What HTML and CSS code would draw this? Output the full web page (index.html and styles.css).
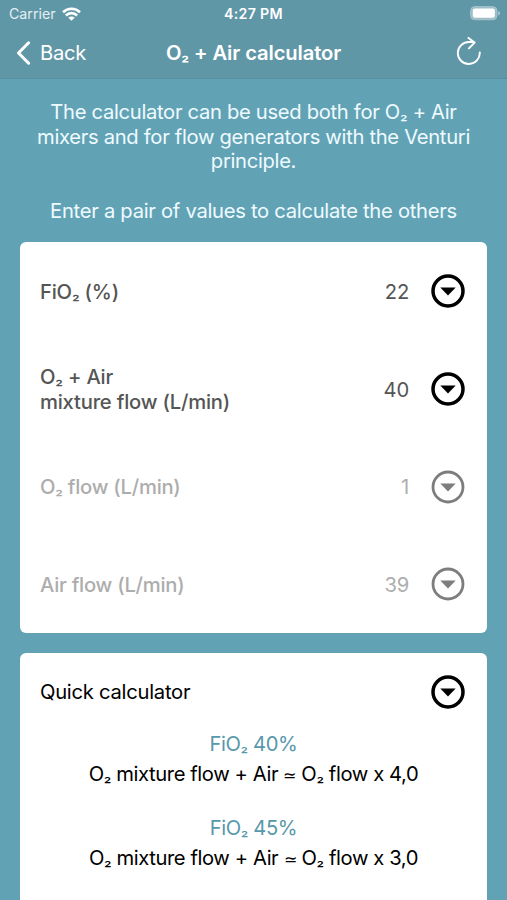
FILE: index.html
```
<!DOCTYPE html>
<html lang="en">
<head>
<meta charset="utf-8">
<title>O₂ + Air calculator</title>
<link rel="stylesheet" href="styles.css">
</head>
<body>
<svg class="defs" aria-hidden="true">
  <symbol id="drop" viewBox="0 0 34 34">
    <circle cx="17" cy="17" r="15" fill="none" stroke="currentColor" stroke-width="var(--ring)"/>
    <path d="M9.3 13.6h15.4L17 21.5z" fill="currentColor"/>
  </symbol>
</svg>
<header class="top">
  <div class="status">
    <div class="carrier"><span>Carrier</span>
      <svg width="19" height="14" viewBox="0 0 19 14" fill="none" stroke="#fff" stroke-width="2.6"><path d="M1 5.2a12.2 12.2 0 0 1 17 0M3.9 8.5a7.8 7.8 0 0 1 11.2 0"/><path d="M9.5 13.7L6.3 10.8a4.5 4.5 0 0 1 6.4 0z" fill="#fff" stroke="none"/></svg>
    </div>
    <div class="time">4:27 PM</div>
    <svg class="battery" width="31" height="15" viewBox="0 0 31 15"><rect x=".7" y=".7" width="26.2" height="13" rx="4" fill="#9bbdc8" stroke="#a9c6cf"/><rect x="2.8" y="2.6" width="22" height="9.2" rx="2" fill="#fff"/><path d="M28.2 5v4.6q1.8-.6 1.8-2.3T28.2 5z" fill="#a9c6cf"/></svg>
  </div>
  <nav class="nav">
    <div class="back"><svg width="15" height="24" viewBox="0 0 15 24" fill="none" stroke="#fff" stroke-width="3" stroke-linecap="round" stroke-linejoin="round"><path d="M12.6 1.8L2.5 12l10.1 10.2"/></svg><span>Back</span></div>
    <h1 class="title">O<span class="s">₂</span> + Air calculator</h1>
    <svg class="reload" width="26" height="32" viewBox="0 0 26 32" fill="none" stroke="#fff" stroke-width="1.9" stroke-linecap="round" stroke-linejoin="round"><path d="M23.8 15.4A11 11 0 1 1 12.8 5H18M12.5 .9L18.6 5.6L12.9 11.4"/></svg>
  </nav>
</header>
<main class="content">
  <div class="intro">
    <p>The calculator can be used both for O<span class="s">₂</span> + Air<br>mixers and for flow generators with the Venturi<br>principle.</p>
    <p class="hint">Enter a pair of values to calculate the others</p>
  </div>
  <section class="card fields">
    <div class="row"><span class="label">FiO<span class="s">₂</span> (%)</span><span class="value">22</span><svg class="drop"><use href="#drop"/></svg></div>
    <div class="row"><span class="label">O<span class="s">₂</span> + Air<br>mixture flow (L/min)</span><span class="value">40</span><svg class="drop"><use href="#drop"/></svg></div>
    <div class="row off"><span class="label">O<span class="s">₂</span> flow (L/min)</span><span class="value">1</span><svg class="drop"><use href="#drop"/></svg></div>
    <div class="row off"><span class="label">Air flow (L/min)</span><span class="value">39</span><svg class="drop"><use href="#drop"/></svg></div>
  </section>
  <section class="card quick">
    <div class="quick-head"><h2>Quick calculator</h2><svg class="drop"><use href="#drop"/></svg></div>
    <div class="formula"><h3>FiO<span class="s">₂</span> 40%</h3><p>O<span class="s">₂</span> mixture flow + Air <span class="approx">≃</span> O<span class="s">₂</span> flow x 4,0</p></div>
    <div class="formula"><h3>FiO<span class="s">₂</span> 45%</h3><p>O<span class="s">₂</span> mixture flow + Air <span class="approx">≃</span> O<span class="s">₂</span> flow x 3,0</p></div>
  </section>
</main>
</body>
</html>
```

FILE: styles.css
```
* { box-sizing: border-box; }
body { margin: 0; height: 900px; overflow: hidden; background: #61a3b5; color: #000; font: 400 20.2px/24.5px Inter, "Liberation Sans", sans-serif; letter-spacing: -.25px; }
h1, h2, h3, p { margin: 0; font: inherit; }
svg { display: block; flex: none; }
.s { font-size: .85em; line-height: 0; }
.defs { position: absolute; width: 0; height: 0; }
.top { height: 79px; background: #6097a7; border-bottom: 1px solid #568fa2; color: #fff; }
.status { height: 26px; display: grid; grid-template-columns: 1fr auto 1fr; align-items: center; padding: 1px 6px 0; font-size: 14.2px; line-height: 20px; }
.carrier { display: flex; align-items: center; gap: 6px; letter-spacing: 0; padding-left: 3px; }
.carrier span { color: #e4eff2; }
.time { font-weight: 600; letter-spacing: .3px; }
.battery { justify-self: end; }
.nav { height: 53px; display: grid; grid-template-columns: 1fr auto 1fr; align-items: center; padding: 1px 16px 0; }
.back { display: flex; align-items: center; gap: 9px; letter-spacing: -.25px; }
.title { font-weight: 600; letter-spacing: -.11px; }
.reload { justify-self: end; margin-right: 9px; }
.intro { padding-top: 21px; height: 163px; text-align: center; color: #effaff; letter-spacing: -.31px; }
.hint { margin-top: 25px; letter-spacing: -.28px; }
.card { margin: 0 20px; background: #fff; border-radius: 6px; }
.fields { height: 391px; }
.row { height: 97.7px; display: flex; align-items: center; padding: 1px 22px 0 20px; color: #555; letter-spacing: -.2px; }
.label { flex: 1; font-weight: 500; padding-top: 1px; }
.value { margin-right: 22px; padding-top: 2px; }
.drop { width: 34px; height: 34px; color: #000; --ring: 3.5; }
.off { color: #adadad; }
.off .label { font-weight: 450; letter-spacing: -.25px; }
.off .drop { color: #7d7d7d; --ring: 2.8; }
.quick { margin-top: 20px; height: 260px; }
.quick-head { height: 78px; margin-bottom: 1px; display: flex; align-items: center; justify-content: space-between; padding: 0 22px 0 20px; }
.quick-head h2 { padding-top: 1px; }
.formula { height: 84px; text-align: center; letter-spacing: -.4px; }
.formula h3 { color: #5798aa; margin-bottom: 5px; }
.approx { font-size: 15.5px; }
```
